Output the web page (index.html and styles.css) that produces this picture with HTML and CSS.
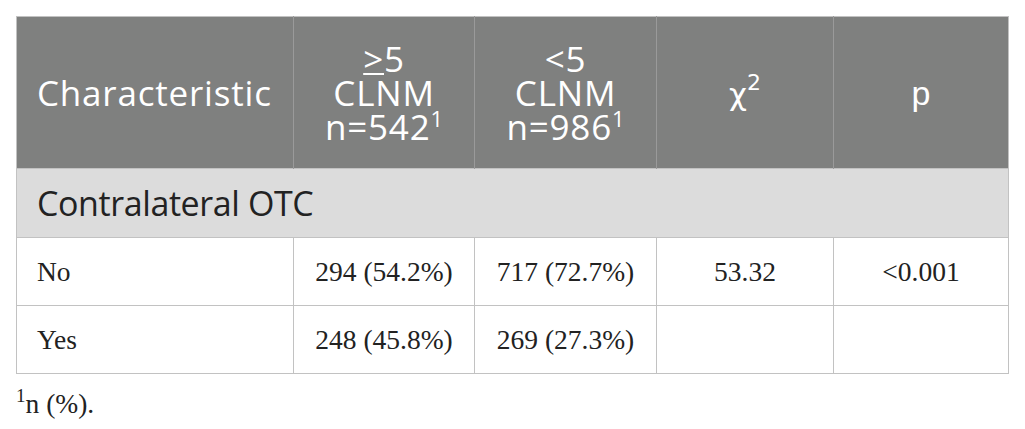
FILE: index.html
```html
<!DOCTYPE html>
<html>
<head>
<meta charset="utf-8">
<link rel="stylesheet" href="styles.css">
</head>
<body>
<div class="wrap">
<table class="data">
  <colgroup>
    <col class="c1"><col class="c2"><col class="c3"><col class="c4"><col class="c5">
  </colgroup>
  <thead>
    <tr>
      <th class="left">Characteristic</th>
      <th><span class="ge">&gt;</span>5<br>CLNM<br>n=542<sup>1</sup></th>
      <th>&lt;5<br>CLNM<br>n=986<sup>1</sup></th>
      <th><span class="chi">χ<sup>2</sup></span></th>
      <th class="p">p</th>
    </tr>
  </thead>
  <tbody>
    <tr class="group"><td colspan="5">Contralateral OTC</td></tr>
    <tr><td class="left">No</td><td>294 (54.2%)</td><td>717 (72.7%)</td><td>53.32</td><td>&lt;0.001</td></tr>
    <tr><td class="left">Yes</td><td>248 (45.8%)</td><td>269 (27.3%)</td><td></td><td></td></tr>
  </tbody>
</table>
<p class="note"><sup>1</sup>n (%).</p>
</div>
</body>
</html>
```
FILE: styles.css
```css
html, body { margin: 0; padding: 0; background: #fff; }
.wrap { padding: 16px 0 0 16px; }
.data {
  border-collapse: collapse;
  width: 993px;
  table-layout: fixed;
  border: 1px solid #c2c2c2;
}
.c1 { width: 277px; }
.c2 { width: 181px; }
.c3 { width: 182px; }
.c4 { width: 177px; }
.c5 { width: 175px; }
.data th {
  background: #7f807f;
  color: #fff;
  font-family: "Open Sans", Lato, sans-serif;
  font-weight: normal;
  font-size: 35px;
  line-height: 34px;
  letter-spacing: 0.8px;
  height: 152px;
  padding: 0 6px;
  text-align: center;
  vertical-align: middle;
  border-left: 1px solid #9a9a9a;
  box-sizing: border-box;
}
.data th:first-child { border-left: none; }
.data th.left { text-align: left; padding-left: 20px; }
.data th sup { font-size: 22px; line-height: 0; vertical-align: 13px; letter-spacing: 0; }
.ge {
  text-decoration: underline;
  text-decoration-thickness: 2px;
  text-underline-offset: 1px;
  text-decoration-skip-ink: none;
}
.chi { font-family: "DejaVu Sans", sans-serif; font-size: 31px; letter-spacing: 0; }
.data th .chi sup { font-family: "DejaVu Sans", sans-serif; font-size: 22px; vertical-align: 15px; }
.data th.p { font-family: "Liberation Sans", sans-serif; font-size: 34px; letter-spacing: 0; }
.data .group td {
  background: #dcdcdc;
  font-family: "Open Sans", Lato, sans-serif;
  font-size: 34px;
  letter-spacing: -0.4px;
  color: #222;
  text-align: left;
  padding-left: 20px;
  height: 69px;
}
.data td {
  font-family: "Liberation Serif", "Times New Roman", serif;
  font-size: 27.5px;
  color: #222;
  text-align: center;
  height: 68px;
  padding: 0 6px;
  border: 1px solid #c2c2c2;
  box-sizing: border-box;
}
.data td.left { text-align: left; padding-left: 20px; }
.note {
  margin: 15px 0 0 0;
  font-family: "Liberation Serif", "Times New Roman", serif;
  font-size: 27.5px;
  color: #222;
  line-height: 30px;
}
.note sup { font-size: 19px; vertical-align: 11px; line-height: 0; }
```
